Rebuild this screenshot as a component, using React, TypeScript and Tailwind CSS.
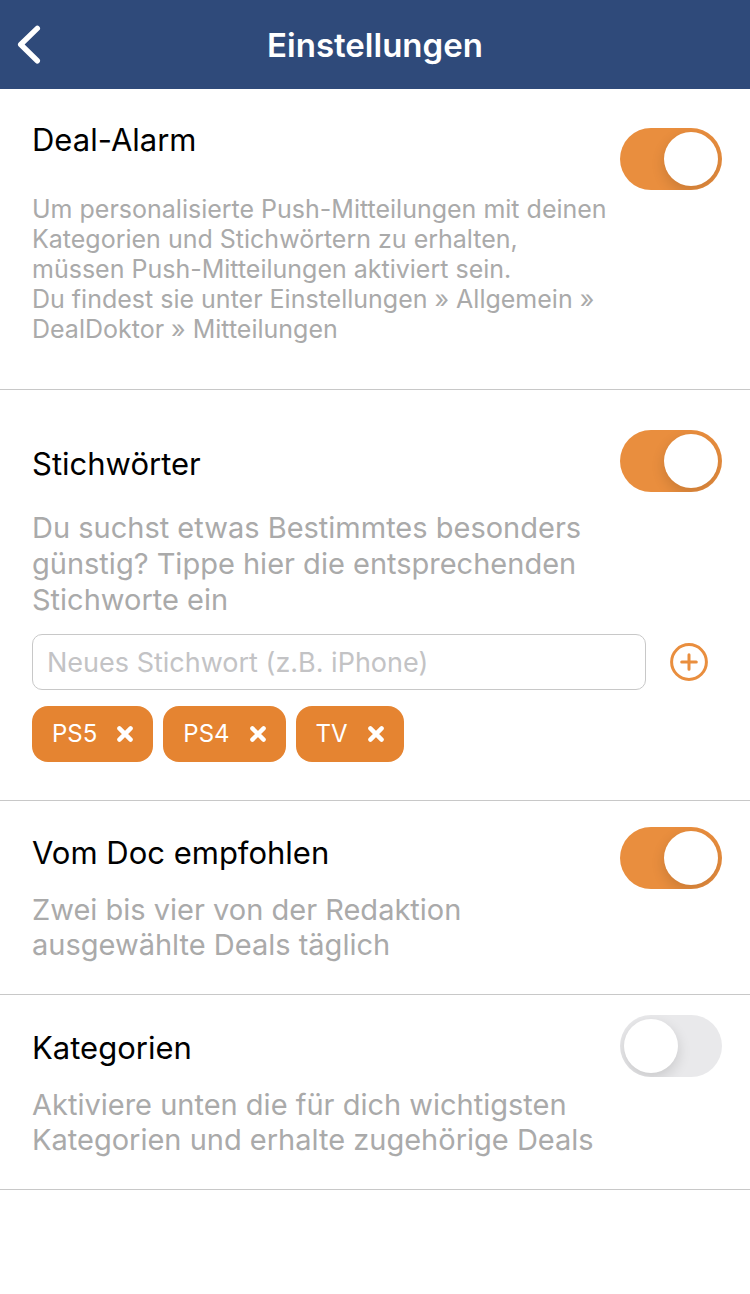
import React, { useState } from 'react';

type SwitchProps = {
  id: string;
  checked: boolean;
  onChange: () => void;
};

function Switch({ id, checked, onChange }: SwitchProps) {
  return (
    <input
      id={id}
      type="checkbox"
      role="switch"
      checked={checked}
      onChange={onChange}
      className="h-[62px] w-[102px] shrink-0 cursor-pointer appearance-none overflow-hidden rounded-full bg-[#e9e9eb] p-1 before:block before:size-[54px] before:rounded-full before:bg-white before:shadow-[0_5px_14px_rgba(0,0,0,0.14)] checked:bg-[#e98e3e] checked:before:ml-10"
    />
  );
}

function App() {
  const [alarm, setAlarm] = useState(true);
  const [keywordsOn, setKeywordsOn] = useState(true);
  const [recommended, setRecommended] = useState(true);
  const [categories, setCategories] = useState(false);
  const [keywords, setKeywords] = useState(['PS5', 'PS4', 'TV']);
  const [draft, setDraft] = useState('');

  const addKeyword = (e: React.FormEvent) => {
    e.preventDefault();
    const value = draft.trim();
    if (value && !keywords.includes(value)) {
      setKeywords([...keywords, value]);
    }
    setDraft('');
  };

  const removeKeyword = (keyword: string) => {
    setKeywords(keywords.filter((k) => k !== keyword));
  };

  return (
    <div className="min-h-screen bg-white font-['Inter',sans-serif] text-black">
      <header className="grid h-[89px] grid-cols-[64px_1fr_64px] items-center bg-[#2f4a7a]">
        <button type="button" aria-label="Zurück" className="flex h-full cursor-pointer items-center pl-4">
          <svg width="26" height="40" viewBox="0 0 26 40" fill="none" stroke="#fff" strokeWidth="5.4" strokeLinecap="round" strokeLinejoin="round">
            <path d="M21.3 3.4 L4.7 19.5 L21.3 35.8" />
          </svg>
        </button>
        <h1 className="text-center text-[33px] leading-10 font-semibold text-white">Einstellungen</h1>
      </header>

      <main>
        <section className="flex justify-between border-b border-[#c8c8c8] pt-[39px] pr-7 pb-[45px] pl-8">
          <div>
            <h2 className="-mt-2 text-[31px] leading-10">
              <label htmlFor="alarm">Deal-Alarm</label>
            </h2>
            <p className="mt-[34px] text-[25px] leading-[30px] text-[#aaaaaa]">
              Um personalisierte Push-Mitteilungen mit deinen<br />
              Kategorien und Stichwörtern zu erhalten,<br />
              müssen Push-Mitteilungen aktiviert sein.<br />
              Du findest sie unter Einstellungen » Allgemein »<br />
              DealDoktor » Mitteilungen
            </p>
          </div>
          <Switch id="alarm" checked={alarm} onChange={() => setAlarm(!alarm)} />
        </section>

        <section className="border-b border-[#c8c8c8] pt-10 pr-7 pb-[38px] pl-8">
          <div className="flex items-center justify-between">
            <h2 className="pt-[6px] text-[31px] leading-10">
              <label htmlFor="keywords">Stichwörter</label>
            </h2>
            <Switch id="keywords" checked={keywordsOn} onChange={() => setKeywordsOn(!keywordsOn)} />
          </div>
          <p className="mt-[18px] text-[29px] leading-9 text-[#aaaaaa]">
            Du suchst etwas Bestimmtes besonders<br />
            günstig? Tippe hier die entsprechenden<br />
            Stichworte ein
          </p>
          <form onSubmit={addKeyword} className="mt-4 flex items-center gap-6 pr-[14px]">
            <input
              type="text"
              aria-label="Neues Stichwort"
              placeholder="Neues Stichwort (z.B. iPhone)"
              value={draft}
              onChange={(e) => setDraft(e.target.value)}
              className="h-14 min-w-0 flex-1 rounded-[10px] border border-[#c8c8c8] px-[14px] text-[27px] placeholder:text-[#c3c3c5]"
            />
            <button type="submit" aria-label="Stichwort hinzufügen" className="cursor-pointer">
              <svg width="38" height="38" viewBox="0 0 38 38" fill="none" stroke="#e98e3e" strokeWidth="3" strokeLinecap="round">
                <circle cx="19" cy="19" r="17.4" />
                <path d="M19 11.7v14.6M11.7 19h14.6" />
              </svg>
            </button>
          </form>
          <ul className="mt-4 flex flex-wrap gap-[10px]">
            {keywords.map((keyword) => (
              <li key={keyword} className="flex h-14 items-center gap-5 rounded-2xl bg-[#e58431] px-5 text-2xl text-white">
                {keyword}
                <button type="button" aria-label={`${keyword} entfernen`} onClick={() => removeKeyword(keyword)} className="cursor-pointer">
                  <svg width="16" height="16" viewBox="0 0 16 16" fill="none" stroke="#fff" strokeWidth="4.4" strokeLinecap="round">
                    <path d="M2.4 2.4l11.2 11.2M13.6 2.4L2.4 13.6" />
                  </svg>
                </button>
              </li>
            ))}
          </ul>
        </section>

        <section className="flex justify-between border-b border-[#c8c8c8] pt-[26px] pr-7 pb-8 pl-8">
          <div>
            <h2 className="mt-[6px] text-[31px] leading-10">
              <label htmlFor="recommended">Vom Doc empfohlen</label>
            </h2>
            <p className="mt-[19px] text-[29px] leading-[35px] text-[#aaaaaa]">
              Zwei bis vier von der Redaktion<br />
              ausgewählte Deals täglich
            </p>
          </div>
          <Switch id="recommended" checked={recommended} onChange={() => setRecommended(!recommended)} />
        </section>

        <section className="flex justify-between border-b border-[#c8c8c8] pt-5 pr-7 pb-8 pl-8">
          <div>
            <h2 className="mt-[13px] text-[31px] leading-10">
              <label htmlFor="categories">Kategorien</label>
            </h2>
            <p className="mt-[19px] text-[29px] leading-[35px] text-[#aaaaaa]">
              Aktiviere unten die für dich wichtigsten<br />
              Kategorien und erhalte zugehörige Deals
            </p>
          </div>
          <Switch id="categories" checked={categories} onChange={() => setCategories(!categories)} />
        </section>
      </main>
    </div>
  );
}

export default App;
